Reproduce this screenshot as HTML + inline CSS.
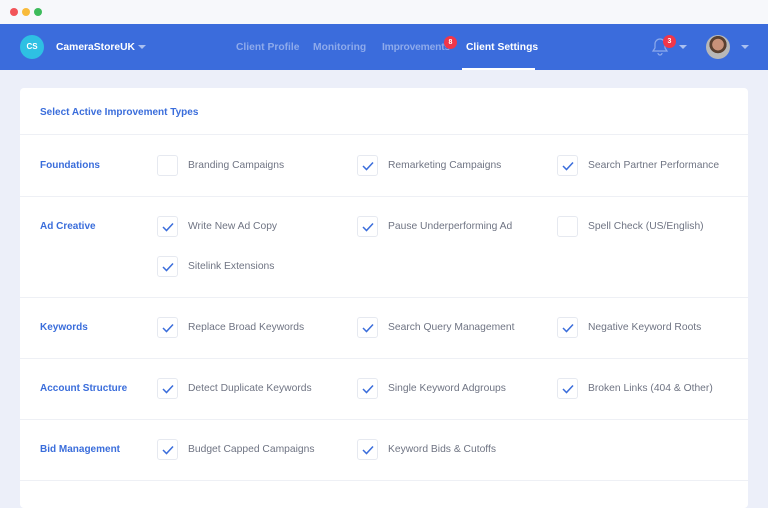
<!DOCTYPE html><html><head><style>
*{margin:0;padding:0;box-sizing:border-box}
body{width:768px;height:500px;overflow:hidden;background:#eceff9;font-family:"Liberation Sans",sans-serif;position:relative}
.a{position:absolute}
.top{left:0;top:0;width:768px;height:24px;background:#f7f8fb}
.dot{top:8px;width:8px;height:8px;border-radius:50%}
.nav{left:0;top:24px;width:768px;height:46px;background:#3b6cdc}
.card{left:20px;top:88px;width:728px;height:420px;background:#fff;border-radius:4px}
.lbl{font-size:10px;color:#3a6ddb;font-weight:bold;left:20px}
.sep{left:0;width:728px;height:1px;background:#eef0f5}
.cb{width:21px;height:21px;border:1px solid #e6e9f0;border-radius:3px}
.cb svg{position:absolute;left:4px;top:5px}
.t{font-size:10.3px;color:#6f7483}
.nl{top:42px;font-size:10.3px;font-weight:bold;color:#8eaaeb}
.badge{background:#f0364a;color:#fff;font-size:7px;font-weight:bold;width:13px;height:13px;border-radius:50%;text-align:center;line-height:13px}
</style></head><body>
<div class="a top"></div>
<div class="a dot" style="left:10px;background:#f25459"></div>
<div class="a dot" style="left:22px;background:#f8bb3b"></div>
<div class="a dot" style="left:34px;background:#3dbb5b"></div>
<div class="a nav"></div>
<div class="a" style="left:20px;top:35px;width:24px;height:24px;border-radius:50%;background:#2ec0e3;color:#fff;font-size:8px;font-weight:bold;text-align:center;line-height:24px">CS</div>
<div class="a" style="left:56px;top:42px;font-size:10.3px;font-weight:bold;color:#fff">CameraStoreUK</div>
<div class="a" style="left:138px;top:45px;border:4px solid transparent;border-top:4px solid #aac0f0"></div>
<div class="a nl" style="left:236px">Client Profile</div>
<div class="a nl" style="left:313px">Monitoring</div>
<div class="a nl" style="left:382px;letter-spacing:-0.2px">Improvements</div>
<div class="a badge" style="left:444px;top:36px">8</div>
<div class="a nl" style="left:466px;color:#fff">Client Settings</div>
<div class="a" style="left:462px;top:68px;width:73px;height:2px;background:#fff"></div>
<svg class="a" style="left:650px;top:35px" width="20" height="22" viewBox="0 0 20 22"><path d="M3 16h14l-2-3V9a5 5 0 0 0-10 0v4z M8 18a2 2 0 0 0 4 0" fill="none" stroke="#8eaaeb" stroke-width="1.2"/></svg>
<div class="a badge" style="left:663px;top:35px">3</div>
<div class="a" style="left:679px;top:45px;border:4px solid transparent;border-top:4px solid #aac0f0"></div>
<div class="a" style="left:706px;top:35px;width:24px;height:24px;border-radius:50%;background:radial-gradient(circle at 50% 40%,#c9927a 0 30%,#5a4030 32% 45%,#b8b8b8 47%)"></div>
<div class="a" style="left:741px;top:45px;border:4px solid transparent;border-top:4px solid #aac0f0"></div>
<div class="a card">
<div class="a lbl" style="top:19px">Select Active Improvement Types</div>
<div class="a sep" style="top:46px"></div>
<div class="a sep" style="top:108px"></div>
<div class="a sep" style="top:209px"></div>
<div class="a sep" style="top:270px"></div>
<div class="a sep" style="top:331px"></div>
<div class="a sep" style="top:392px"></div>
<div class="a lbl" style="top:72px">Foundations</div>
<div class="a lbl" style="top:133px">Ad Creative</div>
<div class="a lbl" style="top:234px">Keywords</div>
<div class="a lbl" style="top:295px">Account Structure</div>
<div class="a lbl" style="top:356px">Bid Management</div>
</div>
<div id="items"></div>
<script>
var ck='<svg width="12" height="10" viewBox="0 0 12 10"><path d="M1 5l3.5 3.5L11 1.5" fill="none" stroke="#3a6ddb" stroke-width="1.5"/></svg>';
var d=[[165,[[0,'Branding Campaigns'],[1,'Remarketing Campaigns'],[1,'Search Partner Performance']]],
[226,[[1,'Write New Ad Copy'],[1,'Pause Underperforming Ad'],[0,'Spell Check (US/English)']]],
[266,[[1,'Sitelink Extensions']]],
[327,[[1,'Replace Broad Keywords'],[1,'Search Query Management'],[1,'Negative Keyword Roots']]],
[388,[[1,'Detect Duplicate Keywords'],[1,'Single Keyword Adgroups'],[1,'Broken Links (404 &amp; Other)']]],
[449,[[1,'Budget Capped Campaigns'],[1,'Keyword Bids &amp; Cutoffs']]]];
var h='';d.forEach(function(r){r[1].forEach(function(c,i){var x=157+i*200;
h+='<div class="a cb" style="left:'+x+'px;top:'+(r[0]-10)+'px">'+(c[0]?ck:'')+'</div><div class="a t" style="left:'+(x+31)+'px;top:'+(r[0]-5)+'px">'+c[1]+'</div>';});});
document.getElementById('items').innerHTML=h;
</script>
</body></html>
